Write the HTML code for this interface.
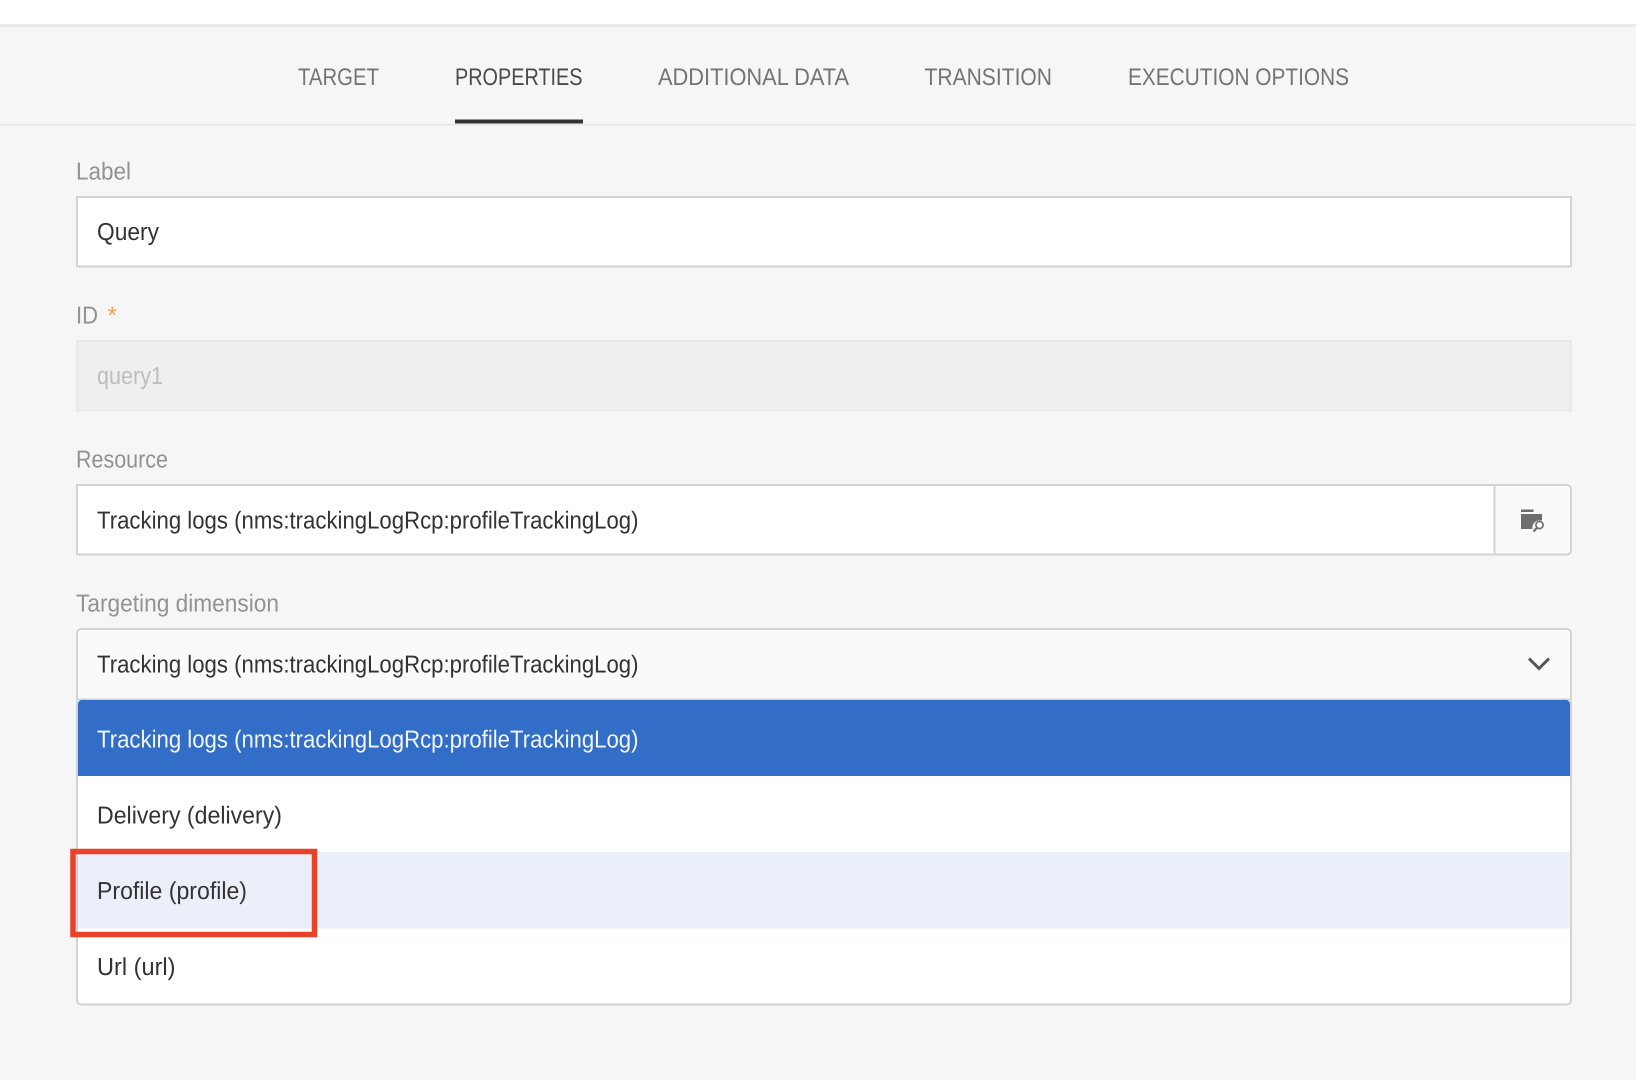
<!DOCTYPE html>
<html lang="en">
<head>
<meta charset="utf-8">
<title>Query properties</title>
<style>
html,body{margin:0;padding:0;width:1636px;height:1080px;overflow:hidden;background:#f6f6f6}
svg{display:block;position:absolute;left:0;top:0}
text{font-family:"Liberation Sans",sans-serif;font-size:24.5px;text-rendering:geometricPrecision}
.tab{fill:#747474;font-size:24px}
.act{fill:#4a4a4a}
.lab{fill:#929292}
.val{fill:#333}
</style>
</head>
<body>
<svg width="1636" height="1080" viewBox="0 0 1636 1080" xmlns="http://www.w3.org/2000/svg">
  <rect width="1636" height="1080" fill="#f6f6f6"/>
  <rect width="1636" height="24" fill="#ffffff"/>
  <rect y="24" width="1636" height="3" fill="#e9e9e9"/>
  <rect y="124" width="1636" height="1.5" fill="#e8e8e8"/>

  <text class="tab" x="298" y="85" textLength="81" lengthAdjust="spacingAndGlyphs">TARGET</text>
  <text class="tab act" x="455" y="85" textLength="127.5" lengthAdjust="spacingAndGlyphs">PROPERTIES</text>
  <text class="tab" x="658" y="85" textLength="191" lengthAdjust="spacingAndGlyphs">ADDITIONAL DATA</text>
  <text class="tab" x="924.5" y="85" textLength="127.5" lengthAdjust="spacingAndGlyphs">TRANSITION</text>
  <text class="tab" x="1128" y="85" textLength="221" lengthAdjust="spacingAndGlyphs">EXECUTION OPTIONS</text>
  <rect x="455" y="119.5" width="128" height="4" fill="#323232"/>

  <text class="lab" x="76" y="179.5" textLength="55" lengthAdjust="spacingAndGlyphs">Label</text>
  <rect x="77" y="197" width="1494" height="69.5" fill="#fff" stroke="#d3d3d3" stroke-width="2"/>
  <text class="val" x="97" y="240" textLength="62" lengthAdjust="spacingAndGlyphs">Query</text>

  <text class="lab" x="76" y="323.5" textLength="22" lengthAdjust="spacingAndGlyphs">ID</text>
  <text x="107.5" y="323.5" fill="#f0a45a" font-size="24.5">*</text>
  <rect x="77" y="341" width="1494" height="69.5" fill="#efefef" stroke="#e9e9e9" stroke-width="2"/>
  <text x="97" y="384" fill="#bdbdbd" textLength="66" lengthAdjust="spacingAndGlyphs">query1</text>

  <text class="lab" x="76" y="467.5" textLength="92" lengthAdjust="spacingAndGlyphs">Resource</text>
  <path d="M1494.5 485H1567a4 4 0 0 1 4 4V550.5a4 4 0 0 1 -4 4H1494.5Z" fill="#fafafa" stroke="#d3d3d3" stroke-width="2"/>
  <rect x="77" y="485" width="1417.5" height="69.5" fill="#fff" stroke="#d3d3d3" stroke-width="2"/>
  <text class="val" x="97" y="528.5" textLength="541.5" lengthAdjust="spacingAndGlyphs">Tracking logs (nms:trackingLogRcp:profileTrackingLog)</text>
  <g fill="#6e6e6e">
    <rect x="1521" y="509.5" width="12.5" height="2.5"/>
    <path d="M1521 514H1542V520.5A7.5 7.5 0 0 0 1532.5 529H1521Z"/>
  </g>
  <circle cx="1539.5" cy="525" r="3.6" fill="none" stroke="#6e6e6e" stroke-width="1.7"/>
  <path d="M1536.8 528L1533.5 531.5" fill="none" stroke="#6e6e6e" stroke-width="2.2"/>

  <text class="lab" x="76" y="611.5" textLength="203" lengthAdjust="spacingAndGlyphs">Targeting dimension</text>
  <path d="M77 700V633a4 4 0 0 1 4 -4H1567a4 4 0 0 1 4 4V700Z" fill="#fafafa" stroke="#d3d3d3" stroke-width="2"/>
  <text class="val" x="97" y="672.5" textLength="541.5" lengthAdjust="spacingAndGlyphs">Tracking logs (nms:trackingLogRcp:profileTrackingLog)</text>
  <path d="M1529 658.5L1539 668.5L1549 658.5" fill="none" stroke="#555" stroke-width="3"/>

  <path d="M77 699.5H1571V1000.5a4 4 0 0 1 -4 4H81a4 4 0 0 1 -4 -4Z" fill="#fff" stroke="#d3d3d3" stroke-width="2"/>
  <path d="M78 704a4 4 0 0 1 4 -4H1566a4 4 0 0 1 4 4V776H78Z" fill="#326ec8"/>
  <rect x="78" y="852" width="1492" height="76.5" fill="#eaeff9"/>
  <text x="97" y="747.5" fill="#f2f6fc" textLength="541.5" lengthAdjust="spacingAndGlyphs">Tracking logs (nms:trackingLogRcp:profileTrackingLog)</text>
  <text class="val" x="97" y="823.5" textLength="185" lengthAdjust="spacingAndGlyphs">Delivery (delivery)</text>
  <text class="val" x="97" y="899" textLength="150" lengthAdjust="spacingAndGlyphs">Profile (profile)</text>
  <text class="val" x="97" y="975" textLength="78.5" lengthAdjust="spacingAndGlyphs">Url (url)</text>

  <rect x="73" y="851.5" width="241.5" height="83" fill="none" stroke="#e8432a" stroke-width="5.5"/>
</svg>
</body>
</html>
